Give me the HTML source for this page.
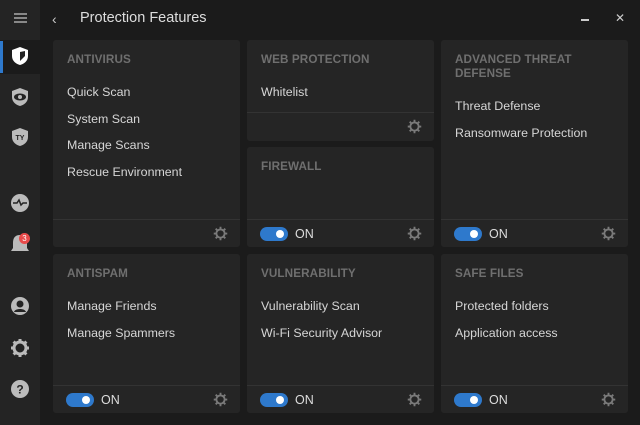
<!DOCTYPE html>
<html><head><style>
*{margin:0;padding:0;box-sizing:border-box}
body{width:640px;height:425px;background:#1b1b1b;font-family:"Liberation Sans",sans-serif;position:relative;overflow:hidden;color:#ddd}
.side{position:absolute;left:0;top:0;width:40px;height:425px;background:#242424}
.ic{position:absolute;left:10px;width:20px;height:20px}
.card{position:absolute;background:#252525;border-radius:3px}
.t{position:absolute;left:14px;top:13px;font-size:11.7px;font-weight:bold;color:#6f6f6f;line-height:14px;letter-spacing:.1px}
.it{position:absolute;left:14px;font-size:12.4px;color:#d6d6d6;margin-top:1px}
.ft{position:absolute;left:0;right:0;bottom:0;height:28px;border-top:1px solid #333}
.tg{position:absolute;left:13px;top:7px;width:28px;height:14px;border-radius:7px;background:#2e79cc}
.tg:after{content:"";position:absolute;right:4px;top:3px;width:8px;height:8px;border-radius:50%;background:#fff}
.on{position:absolute;left:48px;top:7px;font-size:12.5px;color:#ddd}
.g{position:absolute;right:12px;top:6px;width:15px;height:15px}
</style></head><body>
<div class="side">
<svg class="ic" style="top:13px;left:14px;width:13px;height:10px" viewBox="0 0 13 10"><path d="M0 1h13M0 5h13M0 9h13" stroke="#aaa" stroke-width="1.6"/></svg>
<div style="position:absolute;left:0;top:40px;width:40px;height:34px;background:#1b1b1b"></div>
<div style="position:absolute;left:0;top:41px;width:3px;height:32px;background:#2e79cc"></div>
<svg class="ic" style="top:46px" viewBox="0 0 20 20"><path d="M10 1L2 4v6c0 5 4 8 8 9 4-1 8-4 8-9V4z" fill="#fff"/><path d="M10 6l5-1v5l-5 5z" fill="#242424"/></svg>
<svg class="ic" style="top:87px" viewBox="0 0 20 20"><path d="M10 1L2 4v6c0 5 4 8 8 9 4-1 8-4 8-9V4z" fill="#bbb"/><ellipse cx="10" cy="10" rx="6" ry="3.5" fill="#242424"/><circle cx="10" cy="10" r="2" fill="#bbb"/></svg>
<svg class="ic" style="top:127px" viewBox="0 0 20 20"><path d="M10 1L2 4v6c0 5 4 8 8 9 4-1 8-4 8-9V4z" fill="#bbb"/><text x="10" y="13" font-size="7" font-weight="bold" text-anchor="middle" fill="#242424" font-family="Liberation Sans">TY</text></svg>
<svg class="ic" style="top:193px" viewBox="0 0 20 20"><circle cx="10" cy="10" r="9" fill="#bbb"/><path d="M3 10h4l2-3 2 5 2-2h4" stroke="#242424" stroke-width="1.5" fill="none"/></svg>
<svg class="ic" style="top:234px" viewBox="0 0 20 20"><path d="M10 1c-5 0-7 3-7 8v5l-2 3h18l-2-3V9c0-5-2-8-7-8z" fill="#bbb"/></svg>
<div style="position:absolute;left:19px;top:233px;width:11px;height:11px;border-radius:50%;background:#e84a4a;font-size:8px;color:#fff;text-align:center;line-height:11px">3</div>
<svg class="ic" style="top:296px" viewBox="0 0 20 20"><circle cx="10" cy="10" r="9" fill="#bbb"/><circle cx="10" cy="8" r="3.5" fill="#242424"/><path d="M4 16c1-4 11-4 12 0" fill="#242424"/></svg>
<svg class="ic" style="top:338px" viewBox="0 0 20 20"><circle cx="10" cy="10" r="6" fill="none" stroke="#bbb" stroke-width="3"/><path d="M10 1v4M10 15v4M1 10h4M15 10h4M3.6 3.6l3 3M13.4 13.4l3 3M3.6 16.4l3-3M13.4 6.6l3-3" stroke="#bbb" stroke-width="3"/></svg>
<svg class="ic" style="top:379px" viewBox="0 0 20 20"><circle cx="10" cy="10" r="9" fill="#bbb"/><text x="10" y="14.5" font-size="12" font-weight="bold" text-anchor="middle" fill="#242424" font-family="Liberation Sans">?</text></svg>
</div>
<div style="position:absolute;left:52px;top:11px;font-size:14px;color:#ccc">‹</div>
<div style="position:absolute;left:80px;top:10px;font-size:14.5px;color:#ddd">Protection Features</div>
<div style="position:absolute;left:581px;top:19px;width:8px;height:1.5px;background:#ccc"></div>
<div style="position:absolute;left:615px;top:11px;font-size:12px;color:#ccc">✕</div>

<svg width="0" height="0" style="position:absolute"><defs><symbol id="gr" viewBox="0 0 20 20"><circle cx="10" cy="10" r="5.5" fill="none" stroke="#7a7a7a" stroke-width="2.5"/><path d="M10 1v4M10 15v4M1 10h4M15 10h4M3.6 3.6l3 3M13.4 13.4l3 3M3.6 16.4l3-3M13.4 6.6l3-3" stroke="#7a7a7a" stroke-width="2.5"/></symbol></defs></svg>

<div class="card" style="left:53px;top:40px;width:187px;height:207px"><div class="t">ANTIVIRUS</div>
<div class="it" style="top:44px">Quick Scan</div><div class="it" style="top:71px">System Scan</div><div class="it" style="top:97px">Manage Scans</div><div class="it" style="top:124px">Rescue Environment</div>
<div class="ft"><svg class="g"><use href="#gr"/></svg></div></div>

<div class="card" style="left:247px;top:40px;width:187px;height:101px"><div class="t">WEB PROTECTION</div>
<div class="it" style="top:44px">Whitelist</div><div class="ft" style="height:29px"><svg class="g"><use href="#gr"/></svg></div></div>

<div class="card" style="left:247px;top:147px;width:187px;height:100px"><div class="t">FIREWALL</div>
<div class="ft"><div class="tg"></div><div class="on">ON</div><svg class="g"><use href="#gr"/></svg></div></div>

<div class="card" style="left:441px;top:40px;width:187px;height:207px"><div class="t">ADVANCED THREAT<br>DEFENSE</div>
<div class="it" style="top:58px">Threat Defense</div><div class="it" style="top:85px">Ransomware Protection</div>
<div class="ft"><div class="tg"></div><div class="on">ON</div><svg class="g"><use href="#gr"/></svg></div></div>

<div class="card" style="left:53px;top:254px;width:187px;height:159px"><div class="t">ANTISPAM</div>
<div class="it" style="top:44px">Manage Friends</div><div class="it" style="top:71px">Manage Spammers</div>
<div class="ft"><div class="tg"></div><div class="on">ON</div><svg class="g"><use href="#gr"/></svg></div></div>

<div class="card" style="left:247px;top:254px;width:187px;height:159px"><div class="t">VULNERABILITY</div>
<div class="it" style="top:44px">Vulnerability Scan</div><div class="it" style="top:71px">Wi-Fi Security Advisor</div>
<div class="ft"><div class="tg"></div><div class="on">ON</div><svg class="g"><use href="#gr"/></svg></div></div>

<div class="card" style="left:441px;top:254px;width:187px;height:159px"><div class="t">SAFE FILES</div>
<div class="it" style="top:44px">Protected folders</div><div class="it" style="top:71px">Application access</div>
<div class="ft"><div class="tg"></div><div class="on">ON</div><svg class="g"><use href="#gr"/></svg></div></div>
</body></html>
